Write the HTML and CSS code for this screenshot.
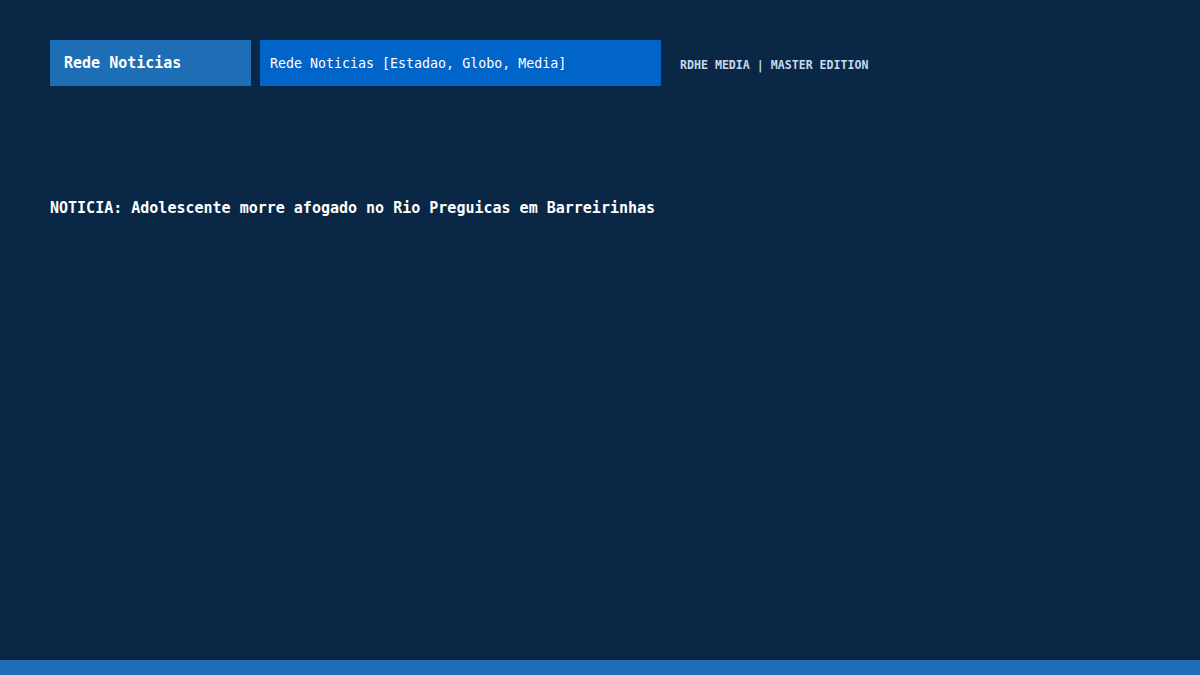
FILE: index.html
```html
<!DOCTYPE html>
<html lang="pt">
<head>
<meta charset="utf-8">
<title>Rede Noticias</title>
<link rel="stylesheet" href="styles.css">
</head>
<body>
<div class="page">
  <main class="content">
    <header class="topbar">
      <div class="brand">Rede Noticias</div>
      <div class="sources">Rede Noticias [Estadao, Globo, Media]</div>
      <div class="edition">RDHE MEDIA | MASTER EDITION</div>
    </header>
    <p class="headline">NOTICIA: Adolescente morre afogado no Rio Preguicas em Barreirinhas</p>
  </main>
  <footer class="bottombar"></footer>
</div>
</body>
</html>
```
FILE: styles.css
```css
html, body {
  margin: 0;
  padding: 0;
  height: 100%;
}
body {
  background: #0a2846;
  font-family: "DejaVu Sans Mono", "Liberation Mono", monospace;
  color: #ffffff;
}
.page {
  min-height: 100vh;
  display: flex;
  flex-direction: column;
}
.content {
  flex: 1;
  padding: 40px 50px 0;
}
.topbar {
  display: flex;
  align-items: center;
  gap: 9px;
}
.brand {
  width: 201px;
  height: 46px;
  box-sizing: border-box;
  padding-left: 14px;
  display: flex;
  align-items: center;
  background: #1e6eb6;
  font-size: 15px;
  font-weight: bold;
}
.sources {
  width: 401px;
  height: 46px;
  box-sizing: border-box;
  padding-left: 10px;
  display: flex;
  align-items: center;
  background: #0064c8;
  font-size: 13.3px;
}
.edition {
  margin-left: 10px;
  margin-top: 3px;
  font-size: 11.6px;
  font-weight: bold;
  color: #c9d8ea;
}
.headline {
  margin: 113px 0 0;
  font-size: 15px;
  font-weight: bold;
  line-height: 18px;
}
.bottombar {
  height: 15px;
  background: #1e6eb6;
}
```
